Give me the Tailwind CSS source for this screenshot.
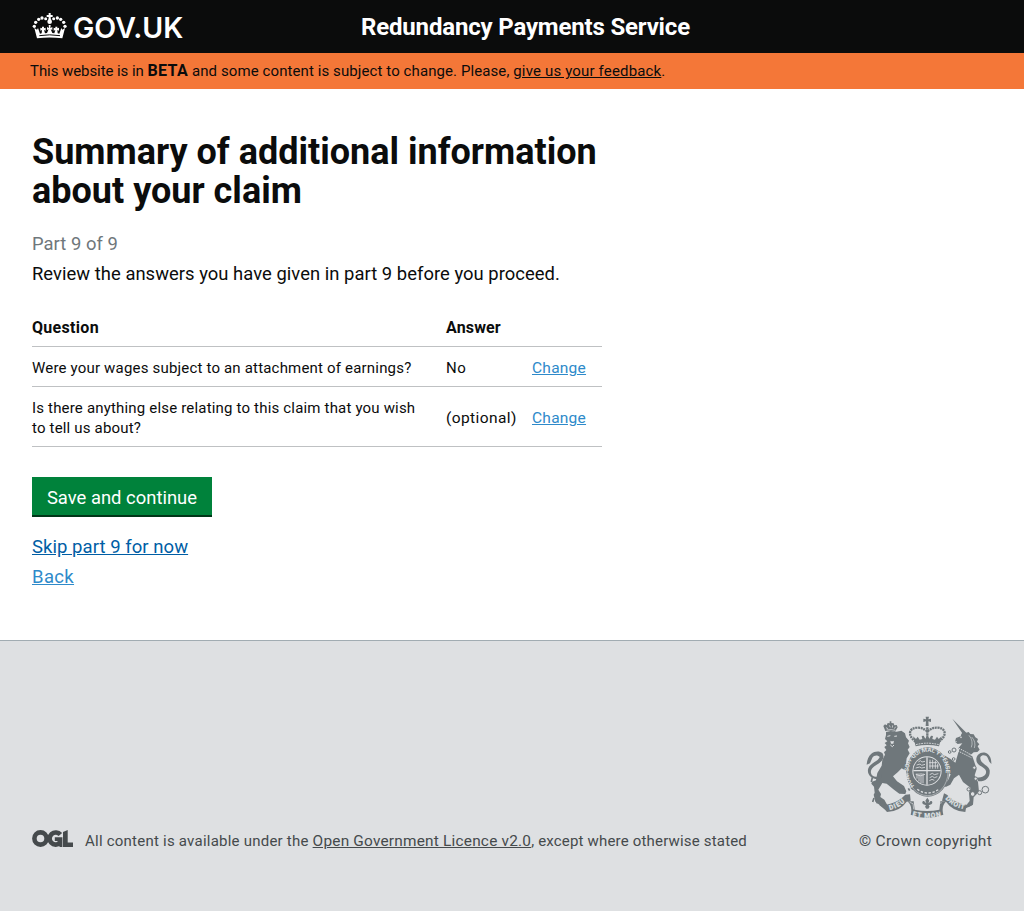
<!DOCTYPE html>
<html lang="en">
<head>
<meta charset="utf-8">
<title>Redundancy Payments Service</title>
<script src="https://cdn.jsdelivr.net/npm/@tailwindcss/browser@4"></script>
</head>
<body class="flex min-h-[911px] flex-col bg-white font-['Roboto','Liberation_Sans',sans-serif] text-[#0b0c0c]">
<header class="flex h-[53px] items-start bg-[#0b0c0c] pl-8 text-white">
  <a class="flex w-[329px] items-start" aria-label="GOV.UK">
    <svg class="mt-3 h-[27px] w-[35px] shrink-0" viewBox="36 36 105 81" fill="#fff">
      <path d="M86 39h6v6h6v6h-6l1 11h-8l1-11h-6v-6h6z"/>
      <circle cx="89" cy="65" r="7"/>
      <circle cx="66" cy="54" r="5"/><circle cx="77" cy="56" r="4.5"/><circle cx="56" cy="58" r="5"/><circle cx="47" cy="67" r="5"/><circle cx="43" cy="79" r="5"/>
      <circle cx="112" cy="54" r="5"/><circle cx="101" cy="56" r="4.5"/><circle cx="122" cy="58" r="5"/><circle cx="131" cy="67" r="5"/><circle cx="135" cy="79" r="5"/>
      <path d="M43 84l8 5 3-5 6 17 5-1 1-10-5 2v-9l5 2v-5h6v5l5-2v9l-5-2 3 10 6-1 5-11-5 2v-9l6 3-1-9h6l-1 9 6-3v9l-5-2 5 11 6 1 3-10-5 2v-9l5 2v-5h6v5l5-2v9l-5-2 1 10 5 1 6-17 3 5 8-5-8 31q-38-5-76 0z"/>
      <path d="M58 107q31-5 62 0" fill="none" stroke="#0b0c0c" stroke-width="3"/>
    </svg>
    <span class="ml-[6px] mt-[10px] font-['Inter',sans-serif] text-[28.5px] font-semibold leading-9 tracking-[0px]">GOV.UK</span>
  </a>
  <div class="mt-3 whitespace-nowrap text-2xl font-bold leading-[30px] tracking-[-0.17px]">Redundancy Payments Service</div>
</header>
<div class="h-9 whitespace-nowrap bg-[#f47738] pl-[30px] pt-2 text-[15px] leading-5"><span class="tracking-[-0.07px]">This website is in </span><strong class="text-base leading-5 tracking-[0.4px]">BETA</strong><span class="tracking-[0.09px]"> and some content is subject to change. Please, </span><a class="tracking-[0.16px] underline underline-offset-1">give us your feedback</a>.</div>

<main class="h-[551px] px-8 pt-11">
  <h1 class="w-[600px] text-4xl font-bold leading-[39px]">Summary of additional information<br>about your claim</h1>
  <p class="mt-[18px] text-[18.4px] leading-[30px] tracking-[0.04px] text-[#6f777b]">Part 9 of 9</p>
  <p class="text-[18.4px] leading-[30px] tracking-[0.04px]">Review the answers you have given in part 9 before you proceed.</p>
  <div class="mt-[18px] w-[570px] text-[15px] leading-5">
    <div class="grid h-10 grid-cols-[414px_86px_70px] border-b border-[#bfc1c3] pt-[11px] text-base font-bold leading-5 tracking-[0.3px]">
      <div>Question</div><div class="tracking-[0.15px]">Answer</div>
    </div>
    <div class="grid h-10 grid-cols-[414px_86px_70px] items-center border-b border-[#bfc1c3] pt-[3px]">
      <div class="tracking-[0.185px]">Were your wages subject to an attachment of earnings?</div><div class="tracking-[0.5px]">No</div><a class="text-[15.5px] tracking-[0.25px] text-[#2e8aca] underline underline-offset-1">Change</a>
    </div>
    <div class="grid h-[60px] grid-cols-[414px_86px_70px] items-center border-b border-[#bfc1c3] pt-[3px]">
      <div class="tracking-[0.18px]">Is there anything else relating to this claim that you wish<br>to tell us about?</div><div class="text-[15.5px] tracking-[0.4px]">(optional)</div><a class="text-[15.5px] tracking-[0.25px] text-[#2e8aca] underline underline-offset-1">Change</a>
    </div>
  </div>
  <button class="mt-[30px] block h-10 w-[180px] border-b-2 border-[#003618] bg-[#00823b] pt-1 text-[18.4px] leading-[30px] tracking-[0.02px] text-white">Save and continue</button>
  <div class="mt-[15px] text-[18.5px] leading-[30px]"><a class="tracking-[0.05px] text-[#005ea5] underline underline-offset-1">Skip part 9 for now</a></div>
  <div class="text-[18.5px] leading-[30px]"><a class="tracking-[0.35px] text-[#2e8aca] underline underline-offset-1">Back</a></div>
</main>

<footer class="flex h-[271px] flex-col border-t border-[#a1acb2] bg-[#dee0e2] px-8 pt-[75px] text-[15px] leading-5 text-[#454a4c]">
  <svg class="h-[103px] w-[126px] self-end" viewBox="20 22 378 309" fill="#6f777b" stroke="#6f777b" stroke-width="0">
    <!-- lion: crown, mane, body, tail -->
    <path d="M78 67l-6-15 5-5 5 3 3-7 6 1v-6h5v5l7 1 2 6 7-1 3 7-8 13q-14-5-29-2z"/>
    <path d="M80 57l6 3m4-10l3 6m7-6l-1 7m10-3l-4 6M82 64q13-3 26 1" stroke="#dee0e2" stroke-width="2.2" fill="none"/>
    <path d="M80 70l14-3 18 2 14-3 11 8 3 12 9 10-3 8 5 11-6 8 6 11-9 15-2 21 16 7 5 13-5 13-9-2-6-14-14-8-12 12-14 12 12 15 21 14 7 16-3 8-18-1-16-12-22-18-13-2-12 20 8 13-2 9 12 8 10 18-7 6-12-4-18-14-5-21 3-6-2-18-8-9 2-6 12-4 4-22 13-22 2-17 8-16-3-7 7-7-6-9 7-5-6-7 8-5-7-7 3-12z"/>
    <path d="M66 210C42 218 20 198 27 179c6-17 30-20 34-34-7-8-17-5-22 2l-7 17-10 4c1-14 5-25 14-33 9-8 25-9 33-2 10 14-3 28-17 35-14 8-19 15-17 26 3 11 17 15 31 4z"/>
    <path d="M84 83l9-2m12 2l8-1M93 109l6 5 5-5" stroke="#dee0e2" stroke-width="3" fill="none"/>
    <path d="M93 96q5 3 11 0l-2 9h-7z" fill="#dee0e2"/>
    <path d="M39 206l-3 14M44 268l-4 12m15-8l-2 12m13-9l1 10M154 235l7 7m-14-3l4 7" stroke-width="5" fill="none"/>
    <!-- unicorn: horn, head, chained body, tail -->
    <path d="M279 30l42 42-8 8z"/>
    <path d="M306 76l8-9 4 6 10-3 5 6 10 1 5 9 8 5-3 8 7 8-5 6 6 10-7 7-11 1-8 7q-24-1-38-19l12-15-14 2-8-7 3-11 14-5z"/>
    <circle cx="305" cy="86" r="2.4" fill="#dee0e2"/>
    <path d="M286 98l7 1M337 85q14 15 8 33M329 80q14 17 7 36" stroke="#dee0e2" stroke-width="1.8" fill="none"/>
    <path d="M300 122l39 21 5 14 8 24-6 19 10 20 3 29-16 17-2 22-14 8-4-9 8-10-2-25 5-14-23-18-12-22-15 11-11 19-14 7-7-8 13-10 9-20-9-6-15 8-9-4 5-11 19-8-6-12-13-5-6-14 13-6 22 13 13 10z"/>
    <path d="M299 119l40 21M296 127l40 20" stroke="#dee0e2" stroke-width="3" stroke-dasharray="4 3" fill="none"/>
    <path d="M357 218C380 219 393 205 391 185c-3-16-30-20-28-39 5-9 17-7 22 1l5 12 6 7c1-19-7-30-18-34-17-4-31 10-26 27 5 14 24 15 28 28 2 11-8 19-28 20z"/>
    <g fill="#dee0e2" stroke-width="3"><circle cx="284" cy="124" r="6"/><circle cx="271" cy="130" r="4"/><circle cx="283" cy="151" r="4"/><circle cx="345" cy="177" r="5"/><circle cx="349" cy="210" r="5"/><circle cx="328" cy="242" r="5"/><circle cx="340" cy="256" r="7"/><circle cx="361" cy="252" r="6"/><circle cx="378" cy="243" r="10"/></g>
    <!-- royal crown -->
    <path d="M199 24h10l-2 8 8-2v10l-8-2 1 14h-9l1-14-8 2V30l8 2z"/>
    <g fill="none" stroke-width="7"><path d="M169 99C142 79 150 57 174 57q16-1 30 12q14-13 30-12c24 0 32 22 5 42" stroke-dasharray="6 2"/><path d="M204 56v40" stroke-dasharray="7 2"/></g>
    <path d="M161 83l9 8 5-7 6 9 8-2-2-9 6-1 5 9 6-10 6 10 5-9 6 1-2 9 8 2 6-9 5 7 9-8-8 30q-35-8-70 0z"/>
    <path d="M170 108q34-9 68 0" fill="none" stroke="#dee0e2" stroke-width="3" stroke-dasharray="5 3"/>
    <!-- garter and quartered shield -->
    <ellipse cx="205" cy="190" rx="64" ry="74"/>
    <ellipse cx="205" cy="190" rx="61" ry="71" fill="none" stroke="#dee0e2" stroke-width="1.5"/>
    <circle cx="203" cy="187" r="44" fill="#dee0e2"/>
    <circle cx="203" cy="187" r="41"/>
    <path d="M203 146v82M162 186h82" stroke="#dee0e2" stroke-width="4"/>
    <g fill="none" stroke="#dee0e2" stroke-width="2.5"><path d="M177 160l6-4 5 4 9-2M172 169l10-3 5 4 10-3M169 178l12-3 6 3 10-2M212 153v27m8-27v27m8-23v23m7-15v15M209 162h25m-25 10h29M173 194v16m6-16v24m6-25v30m6-29v30M169 197q14 9 28 0M211 198l8-4 6 4 12-3M211 207l8-4 6 4 9-3M210 216l8-4 7 3"/></g>
    <path id="garter" d="M165 231C139 205 144 162 168 144C190 125 219 125 239 142C265 163 266 211 243 235" fill="none"/>
    <text fill="#dee0e2" font-family="Roboto, sans-serif" font-size="18" font-weight="700"><textPath href="#garter" textLength="232">HONI SOIT QUI MAL Y PENSE</textPath></text>
    <path d="M174 242q30 22 65 0" fill="none" stroke="#dee0e2" stroke-width="4" stroke-dasharray="7 5"/>
    <!-- motto ribbon -->
    <path d="M153 254l9 19 21-2 6 22h31l7-22 21 3 10-20-13 35-42 10-38-7z" fill="#dee0e2"/>
    <path d="M59 288c22 2 52-3 79-30l14-1 2 19-12 3q-20 29-59 31l-6-7z"/>
    <path d="M340 288c-22 2-50-3-77-30l-9-4-6 22 12 3q20 29 58 31l2-11z"/>
    <path d="M144 278q17 14 10 40 49 20 98 0-7-26 9-40l-18 0-3 25q-36 8-74 0l-3-25z"/>
    <path d="M151 281l10 4 2 17m84-20l-8 3-3 17" fill="none" stroke="#dee0e2" stroke-width="2"/>
    <path d="M204 267l6 9-3 7 4-2c3-9 13-1 5 6l-8 3 3 4-4 6h-6l-4-6 3-4-8-3c-8-7 2-15 5-6l4 2-3-7z"/>
    <path id="dieu" d="M91 304Q123 297 145 271" fill="none"/>
    <path id="mon" d="M159 322Q204 333 248 322" fill="none"/>
    <path id="droit" d="M258 270Q280 297 321 303" fill="none"/>
    <g fill="#dee0e2" stroke="#dee0e2" stroke-width="0.8" font-family="Roboto, sans-serif" font-weight="700" font-size="20"><text><textPath href="#dieu" textLength="52">DIEU</textPath></text><text><textPath href="#mon" textLength="87">ET MON</textPath></text><text><textPath href="#droit" textLength="66">DROIT</textPath></text></g>
  </svg>
  <div class="mt-[11px] flex items-start whitespace-nowrap">
    <svg class="h-[17px] w-[41px] shrink-0" viewBox="0 0 41 17" aria-label="OGL">
      <g fill="none" stroke="#454a4c" stroke-width="4.6"><circle cx="8.5" cy="8.5" r="6.1"/><path d="M28.4 4.6A6.1 6.1 0 1 0 28 12.9"/></g>
      <path d="M22.8 7.2h7.6V17h-2.6l-1-1.6-1.4-4.3h-2.6zM31 2l4.7-2v12.6H41V17H31z" fill="#454a4c"/>
    </svg>
    <p class="ml-3 mt-px"><span class="tracking-[0.23px]">All content is available under the </span><a class="text-[15.4px] tracking-[0.21px] underline underline-offset-1">Open Government Licence v2.0</a><span class="tracking-[0.18px]">, except where otherwise stated</span></p>
    <p class="ml-auto mt-px text-[15.5px] tracking-[0.27px]">© Crown copyright</p>
  </div>
</footer>
</body>
</html>
